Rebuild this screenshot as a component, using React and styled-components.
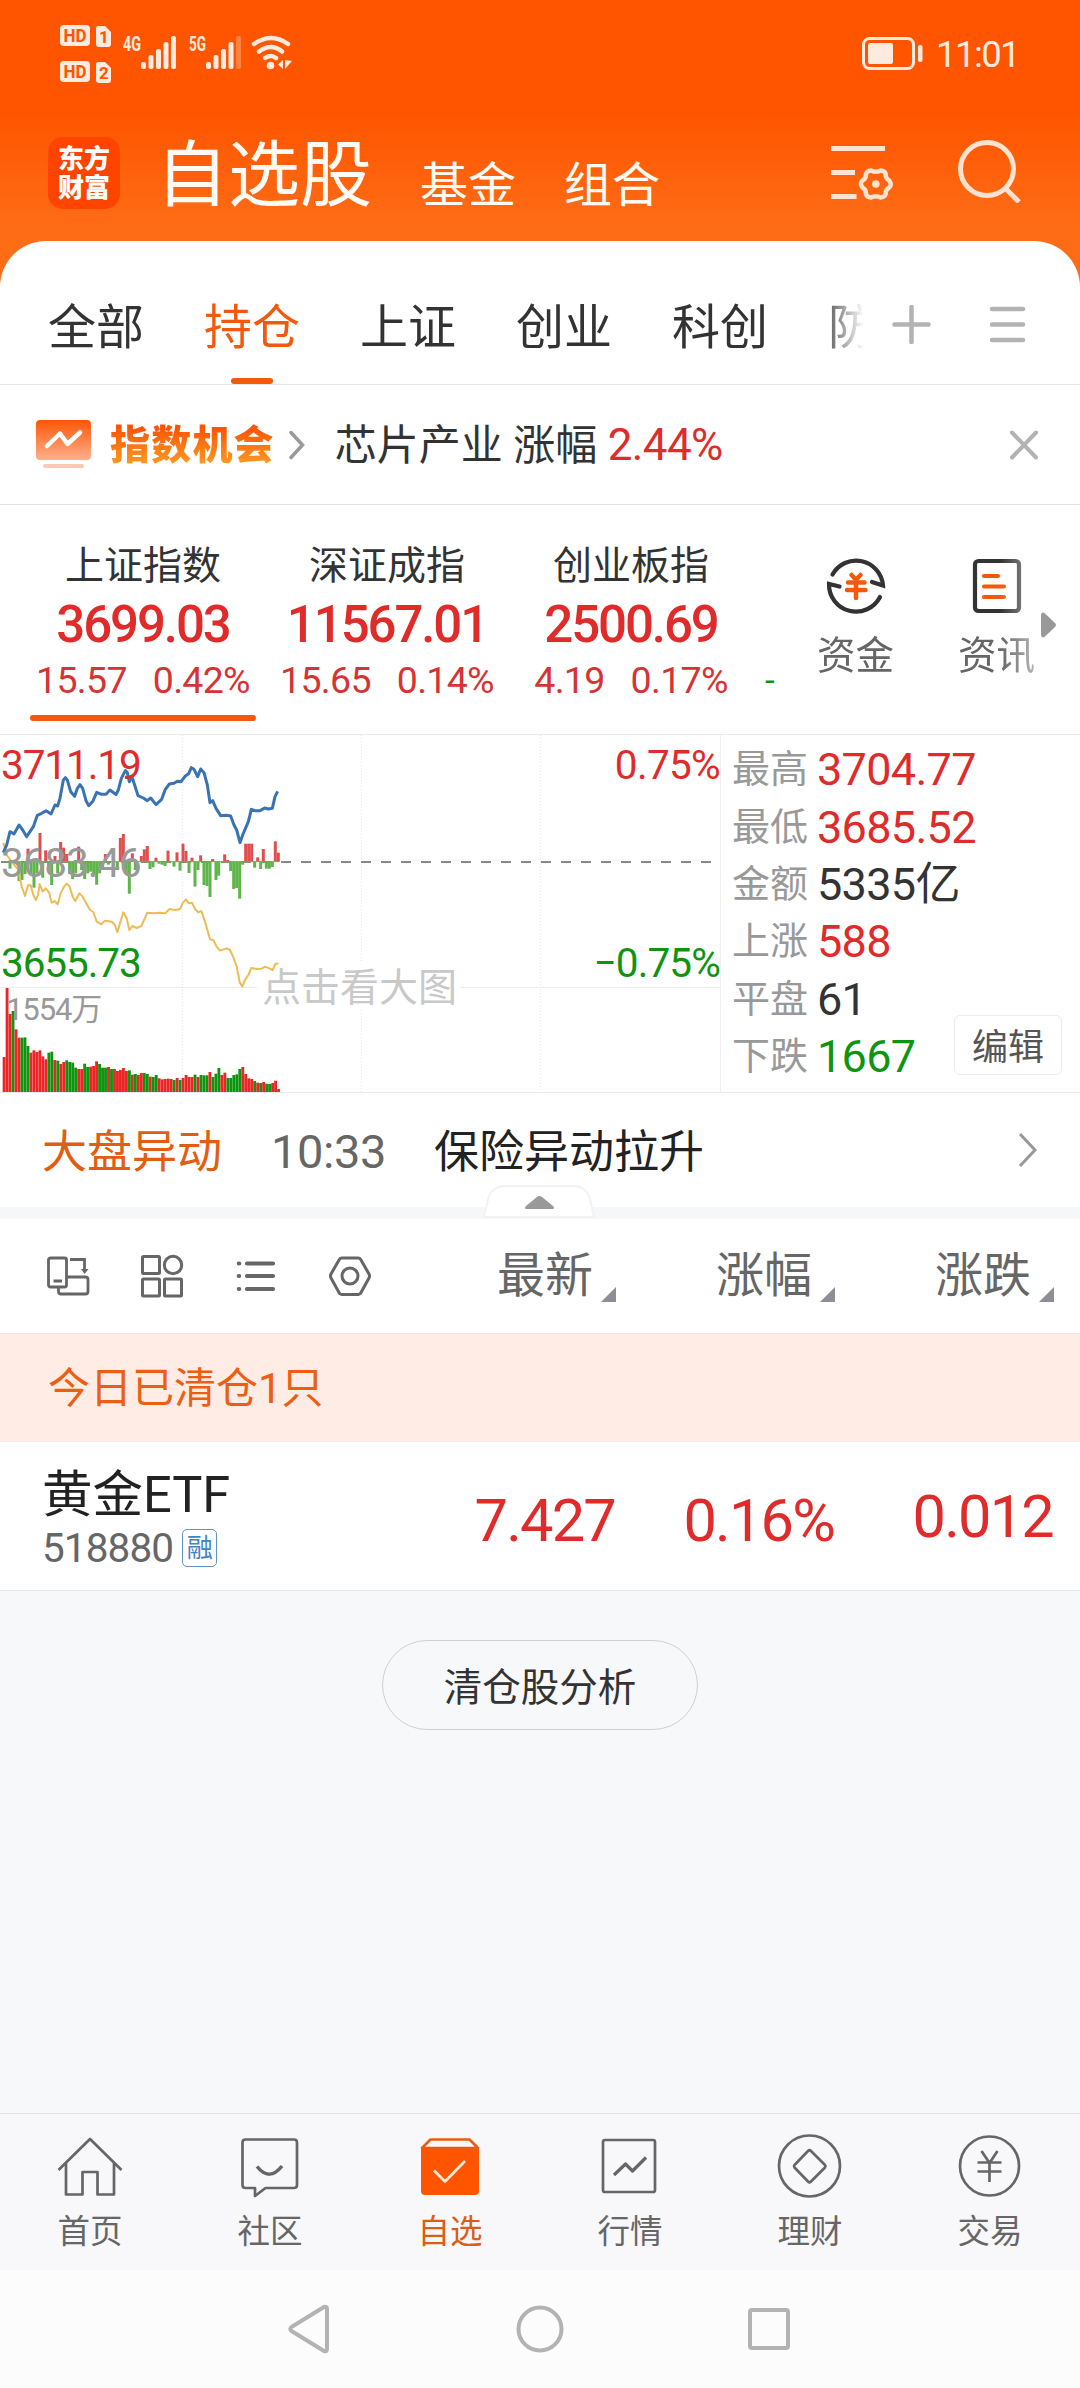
import styled, { createGlobalStyle, css } from "styled-components";

const GlobalStyle = createGlobalStyle`
  * {
    box-sizing: border-box;
  }

  body {
    margin: 0;
    background: #f7f8fa;
    font-family: Roboto, "Noto Sans CJK SC", sans-serif;
    color: #333333;
  }

  svg {
    display: block;
    flex: none;
  }
`;

const RED = "#e02b2b";
const GREEN = "#0f940f";
const ORANGE = "#f2590c";

const Screen = styled.div`
  width: 1080px;
  height: 2388px;
  display: flex;
  flex-direction: column;
  overflow: hidden;
`;

/* ---------- header ---------- */

const Header = styled.header`
  height: 287px;
  flex: none;
  background: linear-gradient(#ff5500 115px, #ff6c16 225px, #ff6c16 241px);
`;

const StatusBar = styled.div`
  height: 108px;
  padding: 25px 61px 0 60px;
  display: flex;
  justify-content: space-between;
`;

const StatusRight = styled.div`
  display: flex;
  gap: 13px;
  padding-top: 12px;
`;

const Clock = styled.span`
  font-size: 36.5px;
  line-height: 36px;
  letter-spacing: -1.6px;
  color: #ffeadf;
`;

const TitleBar = styled.div`
  height: 133px;
  padding: 0 58px 0 48px;
  display: flex;
`;

const AppLogo = styled.div`
  width: 72px;
  height: 72px;
  margin-top: 29px;
  padding-top: 8px;
  border-radius: 15px;
  background: #ff4400;
  color: #ffffff;
  font-size: 26px;
  font-weight: 900;
  line-height: 29px;
  text-align: center;
`;

const Titles = styled.div`
  height: 104px;
  margin-left: 36px;
  display: flex;
  align-items: flex-end;
  color: #fffaf4;
`;

const MainTitle = styled.span`
  font-size: 72px;
  line-height: 72px;
`;

const SubTitle = styled.span`
  margin: 0 0 2px 48px;
  font-size: 48px;
  line-height: 48px;
`;

const TitleIcons = styled.div`
  margin-left: auto;
  padding-top: 31px;
  display: flex;
  gap: 63px;
`;

const Sheet = styled.main`
  height: 1872px;
  flex: none;
  margin-top: -46px;
  border-radius: 46px 46px 0 0;
  background: #ffffff;
`;

/* ---------- group tabs ---------- */

const GroupTabs = styled.nav`
  height: 144px;
  padding-left: 48px;
  display: flex;
  border-bottom: 1px solid #e5e5e5;
`;

const TabScroller = styled.div`
  width: 816px;
  display: flex;
  gap: 60px;
  overflow: hidden;
  mask-image: linear-gradient(90deg, #000 770px, transparent 816px);
`;

const GroupTab = styled.div`
  flex: none;
  padding-top: 62px;
  display: flex;
  flex-direction: column;
  align-items: center;
  font-size: 48px;
  line-height: 50px;
  color: ${props => props.$active ? ORANGE : '#333333'};

  &::after {
    content: "";
    width: 42px;
    height: 6px;
    margin-top: 25px;
    border-radius: 3px;
    background: ${props => props.$active ? ORANGE : 'transparent'};
  }
`;

const TabActions = styled.div`
  padding: 64px 0 0 28px;
  display: flex;
  gap: 57px;
`;

/* ---------- index opportunity ---------- */

const Opportunity = styled.section`
  height: 120px;
  padding: 0 40px 0 36px;
  display: flex;
  align-items: center;
  border-bottom: 1px solid #e2e2e2;
`;

const OpportunityName = styled.span`
  margin: 2px 13px 0 18px;
  font-size: 40px;
  font-weight: 900;
  line-height: 46px;
  letter-spacing: 1.2px;
  color: transparent;
  background: linear-gradient(#fb5404 10%, #ff9a22 90%);
  background-clip: text;
`;

const OpportunityText = styled.span`
  flex: 1;
  margin: 2px 0 0 30px;
  font-size: 42px;
  line-height: 46px;
  white-space: nowrap;

  em {
    font-style: normal;
    font-size: 44px;
    letter-spacing: -0.6px;
    color: ${RED};
  }
`;

/* ---------- index strip ---------- */

const IndexStrip = styled.section`
  position: relative;
  height: 229px;
  display: flex;
`;

const IndexScroller = styled.div`
  width: 785px;
  padding-left: 21px;
  display: flex;
  overflow: hidden;
`;

const IndexItem = styled.div`
  width: 244px;
  flex: none;
  padding-top: 36px;
  display: flex;
  flex-direction: column;
  align-items: center;
`;

const IndexName = styled.span`
  font-size: 39px;
  line-height: 50px;
`;

const IndexPrice = styled.span`
  margin-top: 4px;
  font-size: 51px;
  font-weight: 500;
  line-height: 60px;
  letter-spacing: -2.1px;
  color: ${RED};
`;

const IndexChange = styled.span`
  margin-top: 5px;
  display: flex;
  gap: 26px;
  font-size: 37.5px;
  line-height: 40px;
  letter-spacing: -0.7px;
  color: #d63434;
`;

const IndexUnderline = styled.i`
  width: 226px;
  height: 6px;
  margin-top: 15px;
  border-radius: 3px;
  background: ${ORANGE};
`;

const NextIndex = styled.div`
  padding: 156px 0 0 12px;
  font-size: 35px;
  line-height: 40px;
  color: ${GREEN};
`;

const QuickLinks = styled.div`
  display: flex;
  mask-image: linear-gradient(90deg, #000 215px, rgba(0, 0, 0, 0.4) 255px);
`;

const QuickLink = styled.div`
  width: 141px;
  padding-top: 51px;
  display: flex;
  flex-direction: column;
  align-items: center;
  gap: 16px;
  font-size: 38.5px;
  line-height: 48px;
  color: #666666;
`;

const MoreArrow = styled.svg`
  position: absolute;
  top: 107px;
  right: 23px;
`;

/* ---------- chart ---------- */

const ChartSection = styled.section`
  height: 359px;
  display: flex;
  border-top: 1px solid #ebebeb;
  border-bottom: 1px solid #ebebeb;
`;

const ChartBox = styled.div`
  position: relative;
  width: 721px;
  border-right: 1px solid #efefef;
`;

const labelSpots = {
  high: css`top: 10px; left: 1px; color: ${RED};`,
  middle: css`top: 108px; left: 1px; color: #999999;`,
  low: css`top: 208px; left: 1px; color: ${GREEN};`,
  highPercent: css`top: 10px; right: 0; color: ${RED}; letter-spacing: -0.7px;`,
  lowPercent: css`top: 208px; right: 0; color: ${GREEN}; letter-spacing: -0.9px;`,
  volume: css`top: 255px; left: 6px; color: #999999; font-size: 31px;`,
};

const ChartLabel = styled.span`
  position: absolute;
  font-size: 40.5px;
  line-height: 40px;
  letter-spacing: -1.1px;
  ${props => labelSpots[props.$spot]}
`;

const ChartHint = styled.span`
  position: absolute;
  top: 228px;
  left: 262px;
  font-size: 39px;
  line-height: 50px;
  color: #c9c9c9;
`;

const Stats = styled.div`
  position: relative;
  flex: 1;
  padding: 6px 0 0 11px;
`;

const StatRow = styled.div`
  height: 57.4px;
  display: flex;
  align-items: center;
  gap: 9px;
  font-size: 38px;
  line-height: 57px;
  color: #999999;

  b {
    font-size: 45px;
    font-weight: 400;
    letter-spacing: -0.7px;
    color: ${props => props.$color};
  }
`;

const EditButton = styled.button`
  position: absolute;
  right: 18px;
  bottom: 17px;
  width: 108px;
  height: 60px;
  padding: 0 0 3px;
  border: 1px solid #ececec;
  border-radius: 6px;
  background: #ffffff;
  font-family: inherit;
  font-size: 36px;
  color: #555555;
`;

/* ---------- market event ---------- */

const EventRow = styled.section`
  position: relative;
  height: 126px;
  padding: 0 42px;
  display: flex;
  align-items: center;
  border-bottom: 12px solid #f6f7f9;
  font-size: 45px;
  line-height: 50px;
  color: #222222;
`;

const EventTag = styled.span`
  padding-top: 5px;
  color: #e35d10;
`;

const EventTime = styled.span`
  margin: 0 48px 0 49px;
  padding-top: 4px;
  font-size: 47px;
  letter-spacing: -0.4px;
  color: #666666;
`;

const EventText = styled.span`
  flex: 1;
  padding-top: 5px;
`;

const Handle = styled.svg`
  position: absolute;
  top: 92px;
  left: 483px;
`;

/* ---------- list ---------- */

const ListHead = styled.div`
  height: 115px;
  padding: 0 26px 0 46px;
  display: flex;
  align-items: center;
  justify-content: space-between;
  border-bottom: 1px solid #e8e8e8;
`;

const Tools = styled.div`
  display: flex;
  gap: 50px;
`;

const Columns = styled.div`
  display: flex;
  gap: 100px;
`;

const Column = styled.div`
  display: flex;
  align-items: flex-end;
  gap: 8px;
  font-size: 48px;
  line-height: 52px;
  color: #666666;

  &::after {
    content: "";
    width: 15px;
    height: 15px;
    background: #8e8e96;
    clip-path: polygon(100% 0, 100% 100%, 0 100%);
  }
`;

const ClearedBanner = styled.div`
  height: 108px;
  padding-left: 48px;
  background: #ffede5;
  font-size: 42px;
  line-height: 110px;
  color: #ec5e14;
`;

const StockRow = styled.div`
  height: 149px;
  padding: 0 27px 0 42px;
  display: flex;
  border-bottom: 1px solid #e6e8ec;
`;

const StockName = styled.div`
  flex: 1;
  padding-top: 25px;
  font-size: 50.5px;
  line-height: 56px;
  color: #222222;
`;

const StockCode = styled.div`
  margin-top: 5px;
  display: flex;
  align-items: center;
  gap: 9px;
  font-size: 40.5px;
  line-height: 40px;
  letter-spacing: -0.9px;
  color: #666666;
`;

const MarginTag = styled.span`
  width: 35px;
  height: 38px;
  border: 1px solid #5d94cb;
  border-radius: 5px;
  font-size: 26px;
  line-height: 36px;
  letter-spacing: 0;
  text-align: center;
  color: #4384c6;
`;

const StockValue = styled.div`
  width: 219px;
  padding-top: ${props => props.$raised ? '45px' : '49px'};
  font-size: 59.5px;
  line-height: 60px;
  letter-spacing: -1.8px;
  text-align: right;
  color: ${RED};
`;

const EmptyArea = styled.div`
  height: 522px;
  padding-top: 49px;
  background: #f7f8fa;
`;

const AnalysisButton = styled.button`
  display: block;
  width: 316px;
  height: 90px;
  margin: 0 auto;
  padding: 0 0 3px;
  border: 1px solid #cfd0d3;
  border-radius: 45px;
  background: transparent;
  font-family: inherit;
  font-size: 38.5px;
  color: #333333;
`;

/* ---------- bottom bars ---------- */

const BottomNav = styled.nav`
  height: 157px;
  flex: none;
  display: flex;
  border-top: 1px solid #e2e4e7;
  background: #f8f8fa;
`;

const NavItem = styled.div`
  width: 180px;
  padding-top: 19px;
  display: flex;
  flex-direction: column;
  align-items: center;
  gap: 13px;
  font-size: 32.5px;
  line-height: 40px;
  color: ${props => props.$active ? '#dd5c16' : '#666666'};
`;

const SystemBar = styled.div`
  flex: 1;
  padding: 34px 288px 0;
  display: flex;
  justify-content: space-between;
  background: #fcfcfc;
`;

const Line = styled.svg.attrs({ fill: "none", stroke: "currentColor" })`
  color: ${props => props.$color || '#666666'};
`;

/* ---------- data ---------- */

const groups = ["全部", "持仓", "上证", "创业", "科创", "防"];

const indexes = [
  { name: "上证指数", price: "3699.03", change: "15.57", percent: "0.42%", active: true },
  { name: "深证成指", price: "11567.01", change: "15.65", percent: "0.14%" },
  { name: "创业板指", price: "2500.69", change: "4.19", percent: "0.17%" },
];

const stats = [
  { label: "最高", value: "3704.77", color: RED },
  { label: "最低", value: "3685.52", color: RED },
  { label: "金额", value: "5335亿", color: "#333333" },
  { label: "上涨", value: "588", color: RED },
  { label: "平盘", value: "61", color: "#333333" },
  { label: "下跌", value: "1667", color: GREEN },
];

const priceLine = "10,368 20,345 30,305 42,312 57,285 68,300 80,320 90,305 100,290 112,256 125,250 138,242 153,252 165,225 173,228 180,205 190,150 196,143 202,150 212,185 224,199 232,175 240,164 248,175 258,212 266,227 278,215 290,187 305,193 318,193 330,180 348,194 355,180 364,145 376,122 382,128 388,155 396,141 404,165 414,197 430,204 442,212 452,204 468,224 485,208 496,178 508,162 522,160 532,154 543,155 556,138 566,131 574,113 582,118 593,140 602,117 612,128 622,165 630,218 638,212 648,235 662,257 680,256 692,258 702,285 710,300 720,338 730,310 745,275 754,238 765,242 780,242 794,234 805,237 817,235 825,200 833,184";

const averageLine = "10,338 20,375 35,395 55,420 65,470 75,498 84,466 92,466 100,495 108,510 114,495 119,462 128,485 137,475 147,487 155,518 164,513 173,523 182,490 192,470 200,461 208,468 218,500 226,513 238,490 248,500 258,518 270,540 280,546 290,575 304,583 315,572 335,575 345,585 352,607 360,580 370,547 380,565 388,600 397,588 410,594 424,588 442,548 460,550 480,548 496,550 508,537 525,540 540,537 549,518 558,508 567,520 576,518 585,537 595,547 604,543 615,575 630,628 640,630 650,650 660,662 680,655 690,660 700,682 710,710 719,757 727,769 735,750 745,735 754,714 770,717 785,716 795,710 808,715 818,720 826,702 835,700";

// [x, end] measured from the middle line at 395
const strength = [
  [84, 356], [120, 309], [137, 361], [165, 378], [182, 336], [191, 353], [200, 372], [236, 350], [316, 372],
  [361, 324], [370, 312], [397, 370], [424, 378], [433, 358], [442, 348], [468, 383], [504, 362], [531, 367],
  [549, 341], [558, 363], [576, 383], [602, 376], [638, 387], [674, 373], [683, 390], [737, 341], [746, 341],
  [755, 341], [773, 382], [790, 357], [826, 334], [835, 368],
  [30, 416], [57, 453], [66, 450], [75, 432], [93, 430], [102, 473], [111, 430], [128, 443], [146, 410],
  [155, 465], [173, 430], [209, 432], [218, 447], [227, 430], [245, 420], [254, 447], [263, 430], [272, 425],
  [281, 432], [290, 464], [299, 430], [308, 420], [325, 404], [352, 420], [379, 430], [388, 491], [406, 420],
  [450, 417], [459, 412], [477, 401], [486, 404], [495, 408], [522, 410], [540, 422], [567, 429], [585, 470],
  [594, 420], [612, 465], [621, 468], [630, 501], [648, 450], [656, 437], [692, 423], [701, 477], [710, 474],
  [719, 506], [728, 404], [764, 413], [782, 417], [799, 416], [808, 416], [817, 411],
];

const volumeTops = [
  981, 774, 852, 843, 898, 923, 923, 922, 948, 968, 961, 966, 961, 979, 988, 968, 965, 990, 992, 1002, 996, 991,
  996, 998, 1013, 1017, 1017, 1001, 1011, 1010, 1008, 994, 1002, 1013, 1013, 1011, 1017, 1017, 1023, 1020, 1014,
  1023, 1021, 1034, 1032, 1035, 1029, 1029, 1032, 1040, 1041, 1035, 1045, 1048, 1047, 1046, 1047, 1050, 1044,
  1050, 1044, 1035, 1041, 1041, 1034, 1041, 1035, 1036, 1036, 1026, 1041, 1031, 1014, 1035, 1028, 1044, 1044,
  1035, 1033, 1017, 1011, 1032, 1045, 1047, 1053, 1058, 1059, 1056, 1061, 1062, 1059, 1052, 1077,
];

const volumeSides = "rrrgrrgggrrrrrrggrgrrggggrrggrrrgggrgrrrrrgrgrrggrggrrrrrgrgrrrrgrgggrgggrrgggggrrrrgrgrggrrr";

const Chart = () => (
  <svg width="720" height="357" viewBox="0 15 2160 1071">
    <path d="M0 772H772M1382 772H2160" stroke="#ebebeb" strokeWidth="3" />
    <path d="M547 15V1086M1084 15V700M1084 840V1086M1622 15V1086" stroke="#e4e4e4" strokeWidth="3" strokeDasharray="3 6" />
    <path d="M3 396H2145" stroke="#888888" strokeWidth="6" strokeDasharray="30 30" />
    {strength.map(([x, end]) => (
      <rect
        key={x}
        x={x - 4.5}
        y={Math.min(395, end)}
        width="9"
        height={Math.abs(395 - end)}
        fill={end < 395 ? "#e04f4f" : "#5fb54a"}
      />
    ))}
    <path d="M8 395H838" stroke="#7fa35a" strokeWidth="3" />
    {volumeTops.map((top, i) => (
      <rect
        key={i}
        x={8 + i * 8.95}
        y={top}
        width="8.6"
        height={1086 - top}
        fill={volumeSides[i] === "g" ? "#0f940f" : "#ea2626"}
      />
    ))}
    <polyline points={averageLine} fill="none" stroke="#edbc55" strokeWidth="6" strokeLinejoin="round" />
    <polyline points={priceLine} fill="none" stroke="#3a73b4" strokeWidth="9" strokeLinejoin="round" />
  </svg>
);

/* ---------- icons ---------- */

const SignalIcons = () => (
  <svg width="232" height="58" viewBox="0 0 232 58" fill="#ffeadf" fontFamily="Roboto" fontWeight="700">
    {[0, 36].map((y, i) => (
      <g key={y}>
        <rect x="0" y={y} width="30" height="21" rx="4" />
        <path d={`M38 ${y + 1}h7l6 6v12q0 3-3 3h-9q-3 0-3-3v-15q0-3 2-3z`} />
        <text x="3.5" y={y + 17} fontSize="18" textLength="23" lengthAdjust="spacingAndGlyphs" fill="#ff5500">HD</text>
        <text x="39" y={y + 18} fontSize="17" fill="#ff5500">{i + 1}</text>
      </g>
    ))}
    <text x="63" y="26" fontSize="21" textLength="18" lengthAdjust="spacingAndGlyphs">4G</text>
    <text x="129" y="26" fontSize="21" textLength="17" lengthAdjust="spacingAndGlyphs">5G</text>
    {[81, 146].map(x => (
      <g key={x}>
        <rect x={x} y="37" width="5" height="7" rx="2" />
        <rect x={x + 7.5} y="30" width="5" height="14" rx="2" />
        <rect x={x + 15} y="24" width="5" height="20" rx="2" />
        <rect x={x + 22.5} y="17" width="5" height="27" rx="2" />
        <rect x={x + 30} y="11" width="5" height="33" rx="2" opacity={x === 146 ? 0.3 : 1} />
      </g>
    ))}
    <g fill="none" stroke="#ffeadf" strokeWidth="4.5" strokeLinecap="round">
      <path d="M194 19q17-12 34 0M199 26.500q12-9 23 0M205 33q6-4 11 0" />
    </g>
    <circle cx="210.500" cy="40.500" r="3.800" />
    <path d="M223 35v9l-5-4.500zM225 35v9l7-8z" />
  </svg>
);

const BatteryIcon = () => (
  <svg width="61" height="33" viewBox="0 0 61 33" fill="#ffeadf">
    <rect x="1.500" y="1.500" width="50" height="30" rx="6" fill="none" stroke="#ffeadf" strokeWidth="3" />
    <rect x="6" y="6" width="25" height="21" rx="2" />
    <rect x="56" y="8" width="4.500" height="17" rx="2" />
  </svg>
);

const FilterIcon = () => (
  <Line $color="#ffe3d0" width="64" height="64" viewBox="0 0 64 64" strokeWidth="5">
    <path d="M0 9.500H54M0 33.500H24M0 57.500H25.500" />
    <path
      d="M40 31.500q4.800 2.600 9.600 0q4 .2 5 3q-.3 5 3.600 7q3 4 0 7q-4 2-3.600 7q-1.600 2.800-5 3q-4.800-2.600-9.600 0q-4-.2-5-3q.3-5-3.600-7q-3-4 0-7q4-2 3.600-7q1.600-2.800 5-3z"
      strokeWidth="4.500"
      strokeLinejoin="round"
    />
    <circle cx="44.800" cy="45" r="3.800" fill="currentColor" stroke="none" />
  </Line>
);

const SearchIcon = () => (
  <Line $color="#ffe3d0" width="64" height="64" viewBox="0 0 64 64" strokeWidth="5">
    <circle cx="29" cy="30" r="26.500" />
    <path d="M47 49L61 63" />
  </Line>
);

const OpportunityIcon = () => (
  <svg width="56" height="50" viewBox="0 0 56 50">
    <defs>
      <linearGradient id="board" x1="0" y1="0" x2="0" y2="1">
        <stop offset="0" stopColor="#fc5606" />
        <stop offset="1" stopColor="#ffb08c" />
      </linearGradient>
    </defs>
    <rect width="55" height="40" rx="4" fill="url(#board)" />
    <path d="M11 26L24 13.500L31.500 24L44 12.500" fill="none" stroke="#ffffff" strokeWidth="4.500" strokeLinecap="round" strokeLinejoin="round" />
    <rect x="7" y="44" width="41" height="4" rx="2" fill="#f8c9b5" />
  </svg>
);

const FundIcon = () => (
  <Line $color="#333333" width="60" height="60" viewBox="0 0 60 60" strokeWidth="4.200">
    <path d="M6.500 18.500A27 27 0 0 1 57 29.500L46 26" strokeLinecap="round" />
    <path d="M54 41A27 27 0 0 1 3 28L13.500 30.500" strokeLinecap="round" />
    <path d="M25.500 19L30 23.500L34.500 19M22 26.500H38.500M21 34H39.500M30 25V42" stroke={ORANGE} strokeWidth="4.500" strokeLinecap="round" />
  </Line>
);

const NewsIcon = () => (
  <Line $color="#333333" width="60" height="60" viewBox="0 0 60 60" strokeWidth="4.200">
    <rect x="8" y="5" width="44" height="50" rx="3.500" />
    <path d="M17 20H31M17 30.500H37M17 41H37" stroke={ORANGE} strokeLinecap="round" />
  </Line>
);

const toolIcons = [
  <Line key="rotate" width="44" height="44" viewBox="0 0 44 44" strokeWidth="2.800">
    <rect x="2.500" y="4" width="18" height="29" rx="2" />
    <path d="M7.500 27H16M24 5.500H38.500V18M12.500 33V37.500Q12.500 40 15 40H39.500Q42 40 42 37.500V25.500Q42 23 39.500 23H21" />
    <path d="M35 15H42.500L38.700 20z" fill="currentColor" stroke="none" />
  </Line>,
  <Line key="grid" width="44" height="44" viewBox="0 0 44 44" strokeWidth="3">
    <rect x="2.500" y="2.500" width="17" height="17" rx="1" />
    <circle cx="33" cy="11" r="8.700" />
    <rect x="2.500" y="25" width="17" height="17" rx="1" />
    <rect x="24.500" y="25" width="17" height="17" rx="1" />
  </Line>,
  <Line key="list" width="44" height="44" viewBox="0 0 44 44" strokeWidth="4.200" strokeLinecap="round">
    <path d="M13 9.500H39M13 22H39M13 35H39M4.800 9.500H5.200M4.800 22H5.200M4.800 35H5.200" />
  </Line>,
  <Line key="hexagon" width="44" height="44" viewBox="0 0 44 44" strokeWidth="3" strokeLinejoin="round">
    <path d="M13.500 4H30.500Q32 4 33 6L41 20Q42 22 41 24L33 38.500Q32 40.500 30.500 40.500H13.500Q12 40.500 11 38.500L3 24Q2 22 3 20L11 6Q12 4 13.500 4z" />
    <circle cx="22" cy="22" r="8" />
  </Line>,
];

const navItems = [
  {
    label: "首页",
    icon: <path d="M1.500 37L33 6L64.500 37M9 30V61.500H25.500V39H40.500V61.500H57V30" />,
  },
  {
    label: "社区",
    icon: <><path d="M8.500 6.500H57Q60 6.500 60 9.500V52Q60 55 57 55H28.500L18 63V55H8.500Q5.500 55 5.500 52V9.500Q5.500 6.500 8.500 6.500z" /><path d="M20 33.500Q32.500 49 45 33" strokeWidth="3.500" /></>,
  },
  {
    label: "自选",
    active: true,
    icon: <><path d="M5 15L13.500 6.500H52.500L61 15z" stroke="#ec5a0c" /><path d="M4 16H62V58Q62 62 58 62H8Q4 62 4 58z" fill="#ff5500" stroke="none" /><path d="M17 37.500L28 48.500L48 28" stroke="#ffe6d8" /></>,
  },
  {
    label: "行情",
    icon: <><rect x="6" y="7" width="52" height="52" rx="2" /><path d="M17 42L28.500 31L35.500 38L49 24.500" strokeWidth="3.200" /></>,
  },
  {
    label: "理财",
    icon: <><circle cx="32.500" cy="33" r="30.500" /><path d="M31 18Q32.500 16.500 34 18L48 32Q49 33 48 34.500L34 48.500Q32.500 50 31 48.500L17.500 34.500Q16.500 33 17.500 32z" /></>,
  },
  {
    label: "交易",
    icon: <><circle cx="32.500" cy="33" r="29.500" /><path d="M24.500 18L32.500 30L40.500 18M20.500 29.500H44.500M20.500 38.500H44.500M32.500 29V49" /></>,
  },
];

export default function App() {
  return (
    <Screen>
      <GlobalStyle />
      <Header>
        <StatusBar>
          <SignalIcons />
          <StatusRight>
            <BatteryIcon />
            <Clock>11:01</Clock>
          </StatusRight>
        </StatusBar>
        <TitleBar>
          <AppLogo>东方<br />财富</AppLogo>
          <Titles>
            <MainTitle>自选股</MainTitle>
            <SubTitle>基金</SubTitle>
            <SubTitle>组合</SubTitle>
          </Titles>
          <TitleIcons>
            <FilterIcon />
            <SearchIcon />
          </TitleIcons>
        </TitleBar>
      </Header>

      <Sheet>
        <GroupTabs>
          <TabScroller>
            {groups.map(group => (
              <GroupTab key={group} $active={group === "持仓"}>{group}</GroupTab>
            ))}
          </TabScroller>
          <TabActions>
            <Line $color="#b3b3b3" width="39" height="39" viewBox="0 0 39 39" strokeWidth="4.500" strokeLinecap="round">
              <path d="M2.500 19.500H36.500M19.500 2V37" />
            </Line>
            <Line $color="#b3b3b3" width="39" height="39" viewBox="0 0 39 39" strokeWidth="4.500" strokeLinecap="round">
              <path d="M4 4H35M4 19.500H35M4 35H35" />
            </Line>
          </TabActions>
        </GroupTabs>

        <Opportunity>
          <OpportunityIcon />
          <OpportunityName>指数机会</OpportunityName>
          <Line $color="#999999" width="17" height="30" viewBox="0 0 17 30" strokeWidth="3.500" strokeLinecap="round">
            <path d="M3 2.500L14.500 15L3 27.500" />
          </Line>
          <OpportunityText>芯片产业 涨幅 <em>2.44%</em></OpportunityText>
          <Line $color="#b3b3b3" width="32" height="32" viewBox="0 0 32 32" strokeWidth="4" strokeLinecap="round">
            <path d="M4 3.500L28 28.500M28 3.500L4 28.500" />
          </Line>
        </Opportunity>

        <IndexStrip>
          <IndexScroller>
            {indexes.map(item => (
              <IndexItem key={item.name}>
                <IndexName>{item.name}</IndexName>
                <IndexPrice>{item.price}</IndexPrice>
                <IndexChange>
                  <span>{item.change}</span>
                  <span>{item.percent}</span>
                </IndexChange>
                {item.active && <IndexUnderline />}
              </IndexItem>
            ))}
            <NextIndex>-</NextIndex>
          </IndexScroller>
          <QuickLinks>
            <QuickLink><FundIcon />资金</QuickLink>
            <QuickLink><NewsIcon />资讯</QuickLink>
          </QuickLinks>
          <MoreArrow width="16" height="26" viewBox="0 0 16 26">
            <path d="M0 3Q1-1 4 1.500L14 11Q16 13 14 15L4 24.500Q1 27 0 23z" fill="#999999" />
          </MoreArrow>
        </IndexStrip>

        <ChartSection>
          <ChartBox>
            <Chart />
            <ChartLabel $spot="high">3711.19</ChartLabel>
            <ChartLabel $spot="middle">3683.46</ChartLabel>
            <ChartLabel $spot="low">3655.73</ChartLabel>
            <ChartLabel $spot="highPercent">0.75%</ChartLabel>
            <ChartLabel $spot="lowPercent">−0.75%</ChartLabel>
            <ChartLabel $spot="volume">1554万</ChartLabel>
            <ChartHint>点击看大图</ChartHint>
          </ChartBox>
          <Stats>
            {stats.map(stat => (
              <StatRow key={stat.label} $color={stat.color}>
                {stat.label}
                <b>{stat.value}</b>
              </StatRow>
            ))}
            <EditButton>编辑</EditButton>
          </Stats>
        </ChartSection>

        <EventRow>
          <EventTag>大盘异动</EventTag>
          <EventTime>10:33</EventTime>
          <EventText>保险异动拉升</EventText>
          <Line $color="#999999" width="20" height="36" viewBox="0 0 20 36" strokeWidth="3">
            <path d="M2 2L17 18L2 34" />
          </Line>
          <Handle width="112" height="33" viewBox="0 0 112 33">
            <path d="M1 32L5 14Q9 1 22 1H90Q103 1 107 14L111 32z" fill="#ffffff" stroke="#f1f2f4" strokeWidth="2" />
            <path d="M43 24Q41 23 43 21L54 12Q56.500 10 59 12L70 21Q72 23 70 24z" fill="#999999" />
          </Handle>
        </EventRow>

        <ListHead>
          <Tools>{toolIcons}</Tools>
          <Columns>
            <Column>最新</Column>
            <Column>涨幅</Column>
            <Column>涨跌</Column>
          </Columns>
        </ListHead>
        <ClearedBanner>今日已清仓1只</ClearedBanner>
        <StockRow>
          <StockName>
            黄金ETF
            <StockCode>518880<MarginTag>融</MarginTag></StockCode>
          </StockName>
          <StockValue>7.427</StockValue>
          <StockValue>0.16%</StockValue>
          <StockValue $raised>0.012</StockValue>
        </StockRow>
        <EmptyArea>
          <AnalysisButton>清仓股分析</AnalysisButton>
        </EmptyArea>
      </Sheet>

      <BottomNav>
        {navItems.map(item => (
          <NavItem key={item.label} $active={item.active}>
            <Line width="66" height="66" viewBox="0 0 66 66" strokeWidth="2.700" strokeLinejoin="round">
              {item.icon}
            </Line>
            {item.label}
          </NavItem>
        ))}
      </BottomNav>

      <SystemBar>
        <Line $color="#b3b3b3" width="44" height="50" viewBox="0 0 44 50" strokeWidth="4" strokeLinejoin="round">
          <path d="M3.500 23Q1 25 3.500 27L36 47Q39 48 39 45V5Q39 2 36 3z" />
        </Line>
        <Line $color="#b3b3b3" width="50" height="50" viewBox="0 0 50 50" strokeWidth="4">
          <circle cx="25" cy="25" r="21.500" />
        </Line>
        <Line $color="#b3b3b3" width="44" height="50" viewBox="0 0 44 50" strokeWidth="4">
          <rect x="2" y="6" width="38" height="38" rx="2" />
        </Line>
      </SystemBar>
    </Screen>
  );
}
